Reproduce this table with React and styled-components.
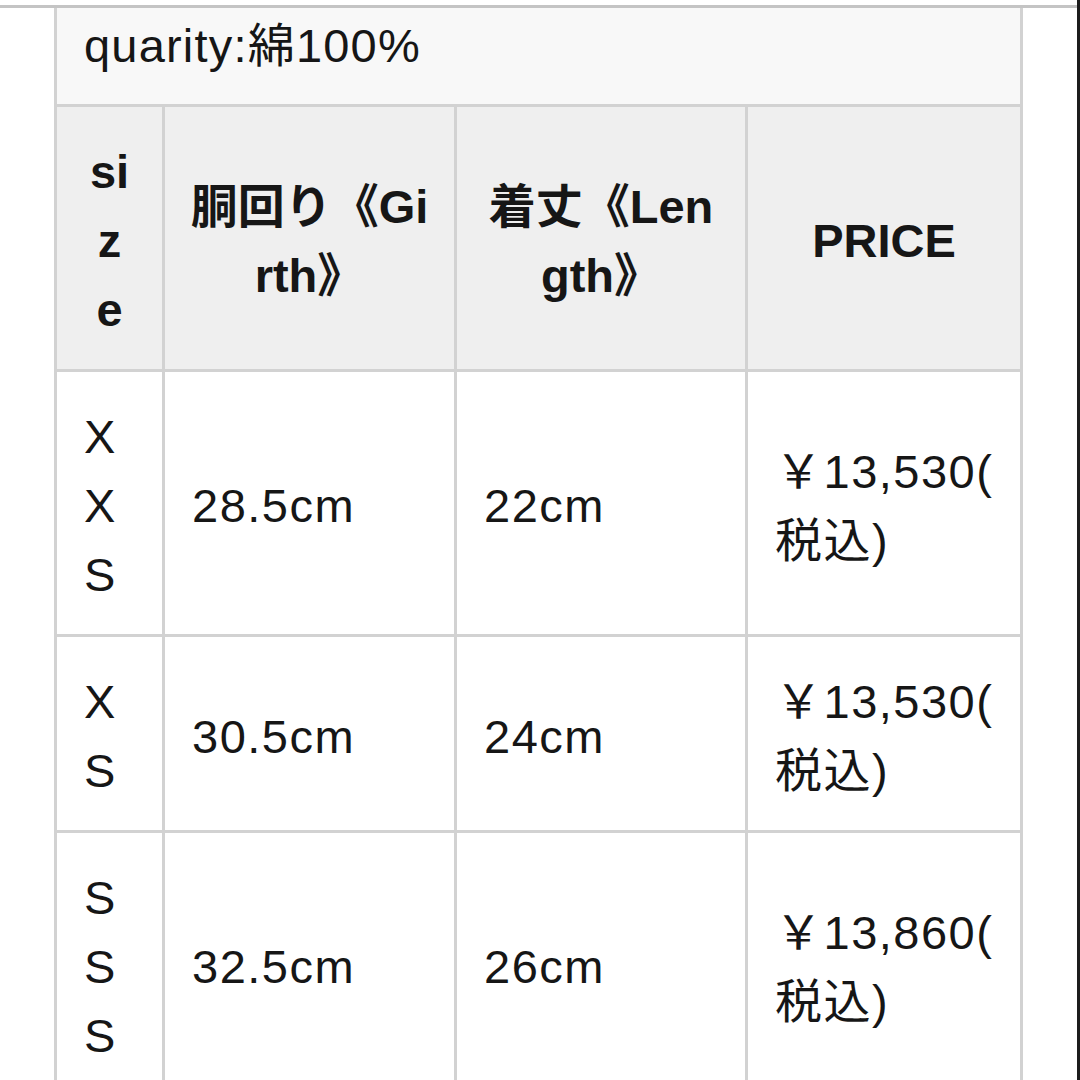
import styled, { createGlobalStyle } from "styled-components"

const GlobalStyle = createGlobalStyle`
  html, body {
    margin: 0;
    padding: 0;
    background: #ffffff;
  }
  body {
    font-family: "Liberation Sans", "Noto Sans CJK JP", sans-serif;
    color: #161616;
  }
`

const header = [
  ["si", "z", "e"],
  ["胴回り《Gi", "rth》"],
  ["着丈《Len", "gth》"],
  ["PRICE"],
]

const rows = [
  [["X", "X", "S"], ["28.5cm"], ["22cm"], ["￥13,530(", "税込)"]],
  [["X", "S"], ["30.5cm"], ["24cm"], ["￥13,530(", "税込)"]],
  [["S", "S", "S"], ["32.5cm"], ["26cm"], ["￥13,860(", "税込)"]],
]

function App() {
  return (
    <Frame>
      <GlobalStyle />
      <Divider />
      <SizeTable>
        <NoteCell>quarity:綿100%</NoteCell>
        {header.map((lines, i) => (
          <HeadCell key={"h" + i}>
            {lines.map((l, j) => <Line key={j}>{l}</Line>)}
          </HeadCell>
        ))}
        {rows.map((row, r) =>
          row.map((lines, c) => (
            <BodyCell key={r + "-" + c}>
              {lines.map((l, j) => <Line key={j}>{l}</Line>)}
            </BodyCell>
          ))
        )}
      </SizeTable>
    </Frame>
  )
}

const Frame = styled.div`
width: 1080px;
height: 1080px;
box-sizing: border-box;
padding-top: 5px;
border-right: 3px solid #1c1c1c;
overflow: hidden;
display: flex;
flex-direction: column;
`

const Divider = styled.div`
height: 3px;
background: #c4c4c4;
flex-shrink: 0;
`

const SizeTable = styled.div`
margin-left: 54px;
width: 969px;
box-sizing: border-box;
display: grid;
grid-template-columns: 105px 289px 288px 272px;
gap: 3px;
padding: 0 3px 3px 3px;
background: #d2d2d2;
font-size: 47px;
line-height: 69px;
`

const NoteCell = styled.div`
grid-column: 1 / -1;
background: #f8f8f8;
padding: 3px 27px 24px;
letter-spacing: 1.2px;
`

const HeadCell = styled.div`
background: #efefef;
font-weight: 700;
text-align: center;
padding: 30px 10px 25px;
display: flex;
flex-direction: column;
justify-content: center;
`

const BodyCell = styled.div`
background: #ffffff;
padding: 30px 27px 25px;
display: flex;
flex-direction: column;
justify-content: center;
white-space: nowrap;
letter-spacing: 1.5px;
`

const Line = styled.span`
display: block;
`

export default App
